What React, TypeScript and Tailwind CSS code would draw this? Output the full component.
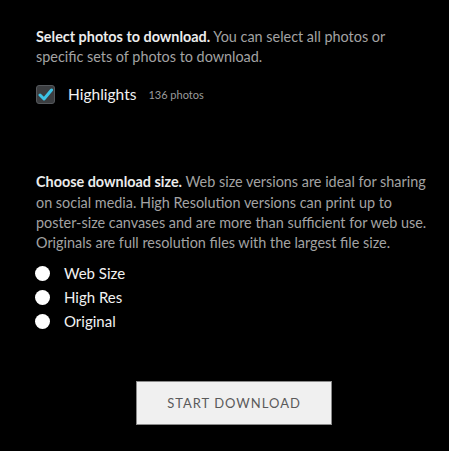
import React, { useState } from "react";

const sizes = ["Web Size", "High Res", "Original"];

const App = () => {
  const [checked, setChecked] = useState(true);
  const [size, setSize] = useState<string | null>(null);

  return (
    <div
      className="w-[449px] h-[451px] bg-black pl-[36px] pr-[14px] pt-[27px]"
      style={{ fontFamily: "Lato, 'Liberation Sans', sans-serif" }}
    >
      <p className="text-[14.4px] leading-[20px] text-[#a3a3a3]">
        <span className="font-bold text-[#ececec]">Select photos to download.</span>{" "}
        You can select all photos or specific sets of photos to download.
      </p>

      <div className="flex items-center mt-[16px]" onClick={() => setChecked(!checked)}>
        <div className="w-[19px] h-[19px] rounded-[3px] bg-[#3b3d40] border border-[#55585c] flex items-center justify-center">
          {checked && (
            <svg width="15" height="13" viewBox="0 0 15 13">
              <path d="M2 7 L6 11 L13.5 2" fill="none" stroke="#3cc3e6" strokeWidth="3" strokeLinecap="round" strokeLinejoin="round" />
            </svg>
          )}
        </div>
        <span className="ml-[13px] text-[15.5px] text-[#f2f2f2]">Highlights</span>
        <span className="ml-[12px] text-[11px] text-[#9b9b9b] mt-[2px]">136 photos</span>
      </div>

      <p className="mt-[66px] text-[14.4px] leading-[20.3px] text-[#a3a3a3]">
        <span className="font-bold text-[#ececec]">Choose download size.</span>{" "}
        Web size versions are ideal for sharing on social media. High Resolution versions can print
        up to poster-size canvases and are more than sufficient for web use. Originals are full
        resolution files with the largest file size.
      </p>

      <div className="mt-[8px] flex flex-col">
        {sizes.map((s) => (
          <label key={s} className="flex items-center h-[24px] cursor-pointer" onClick={() => setSize(s)}>
            <span className="w-[15px] h-[15px] rounded-full bg-white -ml-[1px] flex items-center justify-center">
              {size === s && <span className="w-[7px] h-[7px] rounded-full bg-[#3cc3e6]" />}
            </span>
            <span className="ml-[14px] text-[15px] text-[#f2f2f2]">{s}</span>
          </label>
        ))}
      </div>

      <div className="mt-[48px] pl-[100px]">
        <button className="w-[196px] h-[44px] bg-[#f0f0f0] border border-[#8a8a8a] text-[13px] tracking-[1px] text-[#5a5a5a]">
          START DOWNLOAD
        </button>
      </div>
    </div>
  );
};

export default App;
